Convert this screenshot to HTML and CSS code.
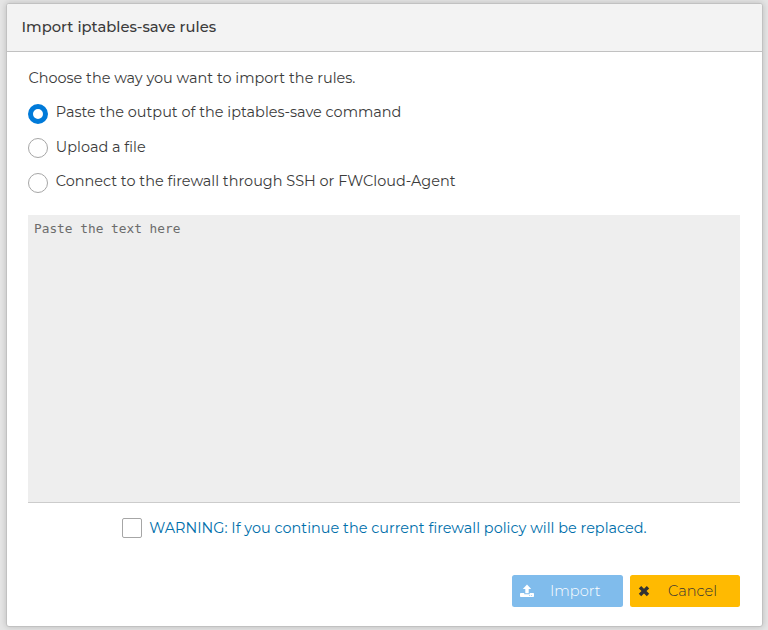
FILE: index.html
```
<!DOCTYPE html>
<html lang="en">
<head>
<meta charset="utf-8">
<title>Import iptables-save rules</title>
<link rel="stylesheet" href="styles.css">
</head>
<body>
<main class="dialog">
  <header class="titlebar"><span class="title">Import iptables-save rules</span></header>
  <section class="content">
    <p class="intro">Choose the way you want to import the rules.</p>
    <div class="options">
      <label class="option"><span class="radio checked"></span><span>Paste the output of the iptables-save command</span></label>
      <label class="option"><span class="radio"></span><span>Upload a file</span></label>
      <label class="option"><span class="radio"></span><span>Connect to the firewall through SSH or FWCloud-Agent</span></label>
    </div>
    <textarea class="rules" placeholder="Paste the text here"></textarea>
    <label class="warning"><span class="checkbox"></span><span>WARNING: If you continue the current firewall policy will be replaced.</span></label>
    <footer class="actions">
      <button class="button import"><svg class="icon" width="14" height="14" viewBox="0 0 14 14"><path fill="currentColor" fill-rule="evenodd" d="M7 .5 11.200 5H8.700v4.300H5.300V5H2.800zM.8 8.900h3.500v1.400h5.400V8.900h3.500q.8 0 .8.8v2.600q0 .8-.8.8H.8q-.8 0-.8-.8V9.700q0-.8.8-.8zM9.200 11.200v.9h.9v-.9zm2 0v.9h.9v-.9z"/></svg><span>Import</span></button>
      <button class="button cancel"><svg class="icon" width="14" height="14" viewBox="0 0 14 14"><path fill="currentColor" d="M4.200 2 7 4.800 9.800 2 12.200 4.400 9.500 7.100l2.700 2.700-2.400 2.400L7 9.400l-2.800 2.800-2.400-2.400 2.700-2.700-2.700-2.700z"/></svg><span>Cancel</span></button>
    </footer>
  </section>
</main>
</body>
</html>
```
FILE: styles.css
```
* { box-sizing: border-box; }
body {
  margin: 0;
  height: 630px;
  padding: 3px 5px 3px 6px;
  overflow: hidden;
  background: #e5e5e5;
  color: #3b3b3b;
  font: 400 14.45px/20px Montserrat, Inter, sans-serif;
}
.dialog {
  height: 624px;
  background: #fff;
  border: 1px solid #c1c1c1;
  border-radius: 3px;
  box-shadow: 0 0 6px rgba(0, 0, 0, .18);
}
.titlebar {
  height: 48px;
  padding: 13px 14.5px;
  background: #f3f3f3;
  border-bottom: 1px solid #c1c1c1;
  border-radius: 2px 2px 0 0;
  font-size: 14.75px;
  font-weight: 500;
}
.content { padding: 16px 22px 0 21px; }
.intro { margin: 0; height: 34px; padding-left: .4px; }
.options { height: 113px; }
.option { display: flex; height: 34.5px; gap: 7.8px; }
.radio {
  width: 20px;
  height: 20px;
  margin-top: 1.8px;
  border: 1px solid #a6a6a6;
  border-radius: 50%;
  background: #fff;
}
.radio.checked { border: 5px solid #007ad9; }
.rules {
  display: block;
  width: 100%;
  height: 288px;
  padding: 6px;
  border: 0;
  border-bottom: 1px solid #ccc;
  background: #eee;
  resize: none;
  outline: none;
  font: 12.8px/16px "DejaVu Sans Mono", monospace;
}
.rules::placeholder { color: #6c6c6c; }
.warning {
  display: flex;
  gap: 7.2px;
  height: 57px;
  padding: 15px 0 0 94px;
  color: #006fab;
}
.checkbox {
  width: 20px;
  height: 20px;
  border: 1px solid #a6a6a6;
  border-radius: 2px;
}
.actions { display: flex; justify-content: flex-end; gap: 7px; padding-top: 15px; }
.button {
  display: flex;
  align-items: center;
  width: 111px;
  height: 32px;
  padding: 0 0 0 8px;
  border: 0;
  border-radius: 2.5px;
  font: inherit;
  font-size: 14.6px;
  font-weight: 330;
}
.import { background: #80bcec; color: #fff; }
.cancel { width: 110px; background: #ffba01; color: #333; padding-left: 7px; }
.icon { margin-right: 16px; }
.cancel .icon { margin-right: 17px; }
```
